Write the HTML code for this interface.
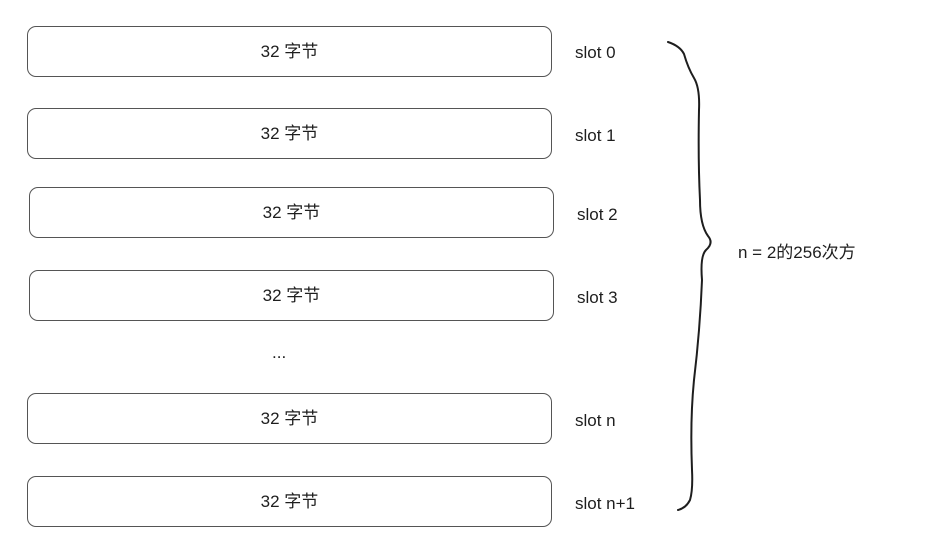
<!DOCTYPE html>
<html><head><meta charset="utf-8"><style>
html,body{margin:0;padding:0;background:#fff;}
body{width:939px;height:556px;position:relative;overflow:hidden;font-family:"Liberation Sans","Noto Sans CJK SC",sans-serif;color:#1e1e1e;}
.b{position:absolute;border:1px solid #555;border-radius:9px;box-sizing:border-box;height:51px;display:flex;align-items:center;justify-content:center;font-size:17px;padding-bottom:4px;}
.t{position:absolute;font-size:17px;white-space:nowrap;}
</style></head><body>
<div class="b" style="left:27px;top:26px;width:525px;">32 字节</div>
<div class="b" style="left:27px;top:108px;width:525px;">32 字节</div>
<div class="b" style="left:29px;top:187px;width:525px;">32 字节</div>
<div class="b" style="left:29px;top:270px;width:525px;">32 字节</div>
<div class="t" style="left:272px;top:343px;">...</div>
<div class="b" style="left:27px;top:393px;width:525px;">32 字节</div>
<div class="b" style="left:27px;top:476px;width:525px;">32 字节</div>
<div class="t" style="left:575px;top:43px;">slot 0</div>
<div class="t" style="left:575px;top:126px;">slot 1</div>
<div class="t" style="left:577px;top:205px;">slot 2</div>
<div class="t" style="left:577px;top:288px;">slot 3</div>
<div class="t" style="left:575px;top:411px;">slot n</div>
<div class="t" style="left:575px;top:494px;">slot n+1</div>
<div class="t" style="left:738px;top:238px;">n = 2的256次方</div>
<svg width="939" height="556" style="position:absolute;left:0;top:0">
<path d="M668 42 Q680 46 684 54 Q688 68 694 78 Q700 88 699 110 Q698 160 700 200 Q700 225 708 236 Q714 243 706 250 Q700 256 702 280 Q700 330 694 380 Q690 420 692 470 Q693 490 690 500 Q686 508 678 510" fill="none" stroke="#1e1e1e" stroke-width="2" stroke-linecap="round"/>
</svg>
</body></html>
